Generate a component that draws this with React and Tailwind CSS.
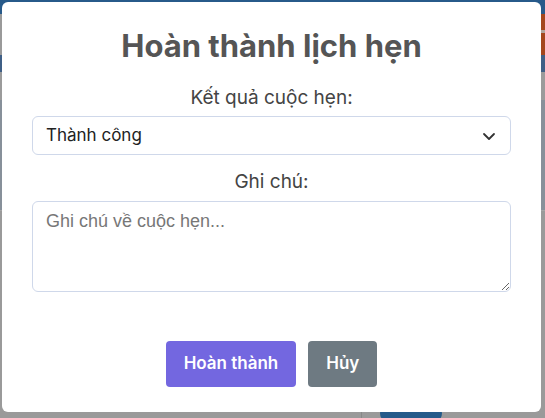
import React from 'react';

const App = () => {
  return (
    <div className="relative w-[545px] h-[418px] overflow-hidden bg-[#9a9a9a] font-['Inter',sans-serif]">
      {/* dimmed page behind the dialog */}
      <div className="flex flex-col">
        <div className="h-[14px] bg-[#275a8a]" />
        <div className="flex h-[41px]">
          <div className="flex-1 bg-[#9a9a9a]" />
          <div className="w-[20px] flex flex-col">
            <div className="h-[16px] bg-[#a4461d]" />
            <div className="h-[3px] bg-[#b0a49c]" />
            <div className="flex-1 bg-[#a4461d]" />
          </div>
        </div>
        <div className="h-[17px] bg-[#3f5f86]" />
        <div className="h-[28px] bg-[#9b9b9b]" />
        <div className="h-[110px] bg-[#87909a]" />
        <div className="h-[80px] bg-[#9a9a9a] border-t border-[#a6a6a6]" />
        <div className="flex h-[128px] pt-[100px]">
          <div className="w-[362px] border-r border-[#888]" />
          <div className="ml-[18px] mt-[13px] w-[62px] h-[20px] rounded-full bg-[#245a8a]" />
        </div>
      </div>

      {/* dialog */}
      <div className="absolute left-[2px] top-[2px] w-[539px] h-[410px] bg-white rounded-[6px] px-[30px] pt-[26px] flex flex-col items-center">
        <h2 className="text-[31px] leading-9 font-bold text-[#555555] text-center">Hoàn thành lịch hẹn</h2>

        <label className="mt-5 text-[19px] leading-7 text-[#444444]">Kết quả cuộc hẹn:</label>
        <div className="mt-1 w-full h-[39px] flex items-center justify-between border border-[#cfd8ea] rounded-[6px] pl-[13px] pr-[13px]">
          <span className="text-[17px] text-[#222222]">Thành công</span>
          <svg width="16" height="16" viewBox="0 0 16 16" fill="none" stroke="#333" strokeWidth="1.8" strokeLinecap="round" strokeLinejoin="round">
            <path d="M3 6l5 5 5-5" />
          </svg>
        </div>

        <label className="mt-[13px] text-[19px] leading-7 text-[#444444]">Ghi chú:</label>
        <textarea
          className="mt-[5px] w-full h-[91px] border border-[#cfd8ea] rounded-[6px] px-[13px] py-[7px] text-[18px] leading-[24px] font-['Liberation_Sans',sans-serif] placeholder:text-[#777777] outline-none"
          placeholder="Ghi chú về cuộc hẹn..."
        />

        <div className="mt-[49px] flex gap-3">
          <button className="h-[46px] px-[18px] rounded-[4px] bg-[#7367e0] text-white font-semibold text-[17px]">Hoàn thành</button>
          <button className="h-[46px] px-[18px] rounded-[4px] bg-[#6e7a82] text-white font-semibold text-[17px]">Hủy</button>
        </div>
      </div>
    </div>
  );
};

export default App;
